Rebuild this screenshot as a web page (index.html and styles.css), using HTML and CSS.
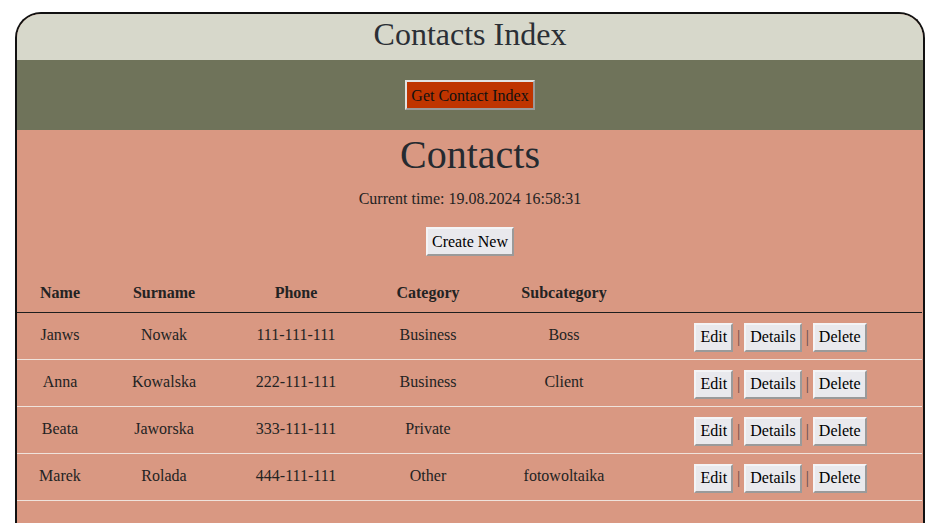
FILE: index.html
```html
<!DOCTYPE html>
<html>
<head>
<meta charset="utf-8">
<title>Contacts Index</title>
<link rel="stylesheet" href="styles.css">
</head>
<body>
<div class="frame">
  <header class="top">Contacts Index</header>
  <div class="band">
    <button class="btn-red">Get Contact Index</button>
  </div>
  <main class="content">
    <h1 class="title">Contacts</h1>
    <p class="time">Current time: 19.08.2024 16:58:31</p>
    <div class="create"><button class="btn">Create New</button></div>
    <table class="grid">
      <colgroup>
        <col class="c1"><col class="c2"><col class="c3"><col class="c4"><col class="c5"><col class="c6">
      </colgroup>
      <thead>
        <tr><th>Name</th><th>Surname</th><th>Phone</th><th>Category</th><th>Subcategory</th><th></th></tr>
      </thead>
      <tbody>
        <tr><td>Janws</td><td>Nowak</td><td>111-111-111</td><td>Business</td><td>Boss</td>
          <td class="acts"><button class="btn">Edit</button><span class="sep">|</span><button class="btn">Details</button><span class="sep">|</span><button class="btn">Delete</button></td></tr>
        <tr><td>Anna</td><td>Kowalska</td><td>222-111-111</td><td>Business</td><td>Client</td>
          <td class="acts"><button class="btn">Edit</button><span class="sep">|</span><button class="btn">Details</button><span class="sep">|</span><button class="btn">Delete</button></td></tr>
        <tr><td>Beata</td><td>Jaworska</td><td>333-111-111</td><td>Private</td><td></td>
          <td class="acts"><button class="btn">Edit</button><span class="sep">|</span><button class="btn">Details</button><span class="sep">|</span><button class="btn">Delete</button></td></tr>
        <tr><td>Marek</td><td>Rolada</td><td>444-111-111</td><td>Other</td><td>fotowoltaika</td>
          <td class="acts"><button class="btn">Edit</button><span class="sep">|</span><button class="btn">Details</button><span class="sep">|</span><button class="btn">Delete</button></td></tr>
      </tbody>
    </table>
  </main>
</div>
</body>
</html>
```
FILE: styles.css
```css
html, body {
  margin: 0;
  padding: 0;
  background: #ffffff;
  font-family: "Liberation Serif", "Times New Roman", serif;
  color: #232323;
}
.frame {
  width: 906px;
  margin: 12px 0 0 15px;
  border: 2px solid #111;
  border-bottom: none;
  border-radius: 26px 26px 0 0;
  overflow: hidden;
  height: 520px;
  background: #d99882;
}
.top {
  height: 46px;
  background: #d7d8cb;
  text-align: center;
  font-size: 32px;
  line-height: 40px;
  color: #2b2f35;
}
.band {
  height: 70px;
  background: #6f735a;
  display: flex;
  align-items: center;
  justify-content: center;
}
.btn-red {
  font-family: "Liberation Serif", "Times New Roman", serif;
  font-size: 16px;
  color: #111;
  background: #bf3400;
  border: 2px solid;
  border-color: #e2e2e2 #9a9a9a #9a9a9a #e2e2e2;
  padding: 2px 4px 0;
  height: 30px;
  white-space: nowrap;
}
.content {
  background: #d99882;
  text-align: center;
}
.title {
  margin: 0;
  padding-top: 2px;
  font-size: 40px;
  font-weight: normal;
  line-height: 46px;
  color: #252a30;
}
.time {
  margin: 12px 0 0;
  font-size: 16px;
  line-height: 18px;
}
.create {
  margin-top: 19px;
  height: 29px;
}
.btn {
  font-family: "Liberation Serif", "Times New Roman", serif;
  font-size: 16px;
  color: #000;
  background: #e9e9ed;
  border: 2px solid;
  border-color: #f4f4f6 #9a9a9a #9a9a9a #f4f4f6;
  padding: 0 4px;
  height: 29px;
  vertical-align: middle;
}
.grid {
  margin-top: 17px;
  width: 905px;
  border-collapse: collapse;
  table-layout: fixed;
}
.c1 { width: 86px; }
.c2 { width: 122px; }
.c3 { width: 142px; }
.c4 { width: 122px; }
.c5 { width: 150px; }
.c6 { width: 283px; }
.grid th {
  height: 39px;
  font-size: 16px;
  font-weight: bold;
  border-bottom: 1px solid #1e1e1e;
  padding: 0;
  vertical-align: middle;
}
.grid td {
  height: 46px;
  padding: 0;
  font-size: 16px;
  border-bottom: 1px solid #efe3dc;
  vertical-align: middle;
  text-align: center;
}
.grid td:not(.acts) {
  padding-bottom: 2px;
  height: 44px;
}
.acts {
  white-space: nowrap;
  padding-top: 2px !important;
  height: 44px !important;
}
.sep {
  display: inline-block;
  color: #5e4a48;
  margin: 0 4px;
  vertical-align: middle;
}
```
